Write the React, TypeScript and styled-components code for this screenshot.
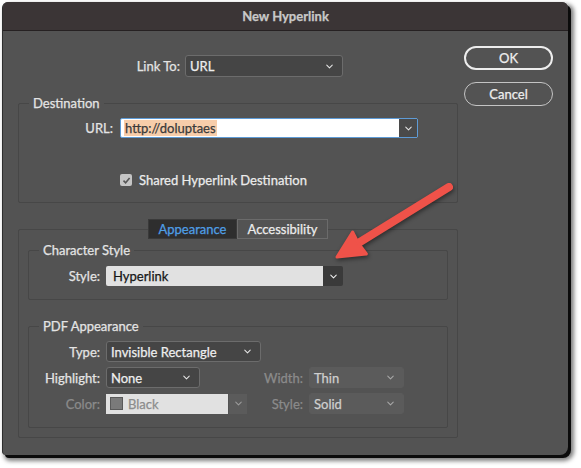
import React from 'react';
import styled, { createGlobalStyle } from 'styled-components';
import { ChevronDown } from 'lucide-react';

const GlobalStyle = createGlobalStyle`
  html, body {
    margin: 0;
    padding: 0;
    background: #fff;
  }
  body {
    font-family: Lato, "Liberation Sans", sans-serif;
    font-size: 13px;
    -webkit-text-stroke: 0.25px currentColor;
  }
`;

const Page = styled.div`
  position: relative;
  width: 581px;
  height: 468px;
  padding: 2px 0 0 2px;
  box-sizing: border-box;
  background: #fff;
  overflow: hidden;
`;

const Dialog = styled.div`
  width: 566px;
  height: 453px;
  display: flex;
  flex-direction: column;
  background: #535353;
  border-left: 1px solid #2e2e2e;
  box-sizing: border-box;
  border-radius: 6px 6px 8px 4px;
  box-shadow: 3px 3px 0 #0b0b0b, 4px 4px 4px 2px rgba(0, 0, 0, 0.5);
  overflow: hidden;
`;

const TitleBar = styled.div`
  height: 28px;
  line-height: 28px;
  flex: none;
  text-align: center;
  background: #3b3536;
  border-bottom: 1px solid #262122;
  color: #c8c8c8;
  font-weight: 700;
  font-size: 13px;
`;

const Body = styled.div`
  flex: 1;
  display: flex;
  gap: 6px;
  padding: 0 15px 0 15px;
`;

const Main = styled.div`
  width: 440px;
  display: flex;
  flex-direction: column;
`;

const ButtonColumn = styled.div`
  width: 89px;
  display: flex;
  flex-direction: column;
  gap: 12px;
  padding-top: 15px;
`;

const PillButton = styled.button<{ $primary?: boolean }>`
  height: 24px;
  width: 89px;
  box-sizing: border-box;
  border-radius: 12px;
  border: ${(p) => (p.$primary ? '2px solid #ededed' : '1px solid #c4c4c4')};
  background: transparent;
  color: #eeeeee;
  font-family: inherit;
  font-size: 13px;
  padding: 0;
`;

const Row = styled.div<{ $top: number; $gap?: number; $h?: number }>`
  display: flex;
  align-items: center;
  gap: ${(p) => p.$gap ?? 6}px;
  margin-top: ${(p) => p.$top}px;
  height: ${(p) => p.$h ?? 21}px;
`;

const Label = styled.span<{ $w: number; $disabled?: boolean }>`
  width: ${(p) => p.$w}px;
  flex: none;
  text-align: right;
  color: ${(p) => (p.$disabled ? '#8b8b8b' : '#e4e4e4')};
  white-space: nowrap;
`;

const Select = styled.div<{ $w: number; $h?: number; $muted?: boolean; $pad?: number }>`
  width: ${(p) => p.$w}px;
  height: ${(p) => p.$h ?? 21}px;
  box-sizing: border-box;
  display: flex;
  align-items: center;
  justify-content: space-between;
  padding: 0 7px 0 ${(p) => p.$pad ?? 4}px;
  border-radius: 3px;
  background: ${(p) => (p.$muted ? '#5b5b5b' : '#454545')};
  border: 1px solid ${(p) => (p.$muted ? '#5b5b5b' : '#6c6c6c')};
  color: ${(p) => (p.$muted ? '#cfcfcf' : '#eeeeee')};
  white-space: nowrap;
`;

const Group = styled.div<{ $top: number; $pb: number }>`
  margin-top: ${(p) => p.$top}px;
  border: 1px solid #474747;
  border-radius: 2px;
  padding-bottom: ${(p) => p.$pb}px;
  display: flex;
  flex-direction: column;
`;

const Caption = styled.div`
  align-self: flex-start;
  margin: -9px 0 0 10px;
  padding: 0 4px;
  height: 16px;
  line-height: 16px;
  background: #535353;
  color: #e4e4e4;
`;

const Panel = styled.div`
  margin-top: 26px;
  border: 1px solid #474747;
  border-radius: 2px;
  padding: 0 9px 9px;
  display: flex;
  flex-direction: column;
`;

const Tabs = styled.div`
  align-self: center;
  margin-top: -11px;
  display: flex;
  height: 20px;
`;

const Tab = styled.div<{ $active?: boolean; $w: number }>`
  width: ${(p) => p.$w}px;
  box-sizing: border-box;
  display: flex;
  align-items: center;
  justify-content: center;
  background: ${(p) => (p.$active ? '#2e2e2e' : '#535353')};
  border: 1px solid ${(p) => (p.$active ? '#3a3a3a' : '#6b6b6b')};
  color: ${(p) => (p.$active ? '#4f9fe6' : '#ececec')};
`;

const UrlCombo = styled.div`
  width: 298px;
  height: 20px;
  box-sizing: border-box;
  display: flex;
  border: 1px solid #5e9bd6;
  border-radius: 2px;
  background: #fff;
`;

const UrlText = styled.div`
  flex: 1;
  display: flex;
  align-items: center;
  padding-left: 3px;
  color: #3a3a3a;
`;

const Selected = styled.span`
  background: #f7cdaa;
  padding: 0 1px;
  line-height: 16px;
`;

const ComboButton = styled.div<{ $w: number; $bg: string }>`
  width: ${(p) => p.$w}px;
  flex: none;
  display: flex;
  align-items: center;
  justify-content: center;
  background: ${(p) => p.$bg};
`;

const Checkbox = styled.div`
  width: 12px;
  height: 12px;
  border-radius: 2px;
  background: #c5c5c5;
  display: flex;
  align-items: center;
  justify-content: center;
`;

const CheckText = styled.span`
  color: #ececec;
`;

const StyleCombo = styled.div`
  width: 237px;
  height: 20px;
  display: flex;
  border-radius: 2px;
  overflow: hidden;
`;

const LightField = styled.div<{ $w?: number }>`
  flex: ${(p) => (p.$w ? 'none' : '1')};
  width: ${(p) => (p.$w ? `${p.$w}px` : 'auto')};
  display: flex;
  align-items: center;
  gap: 5px;
  padding-left: 7px;
  background: #e1e1e1;
  color: #161616;
`;

const ColorCombo = styled.div`
  width: 134px;
  height: 20px;
  display: flex;
  gap: 1px;
`;

const Swatch = styled.span`
  width: 11px;
  height: 11px;
  margin-left: -3px;
  background: #7a7a7a;
  border: 1px solid #5a5a5a;
`;

const DisabledText = styled.span`
  color: #8c8c8c;
`;

const PdfGrid = styled.div`
  margin-top: 7px;
  display: grid;
  grid-template-columns: 71px 134px 57px 95px;
  grid-auto-rows: 21px;
  column-gap: 6px;
  row-gap: 5px;
  align-items: center;
`;

const Wide = styled.div`
  grid-column: 2 / span 3;
`;

const ArrowLayer = styled.svg`
  position: absolute;
  left: 0;
  top: 0;
  pointer-events: none;
  filter: drop-shadow(1px 2px 2px rgba(0, 0, 0, 0.45));
`;

const Chevron = ({ color = '#e6e6e6' }: { color?: string }) => (
  <ChevronDown size={11} strokeWidth={2.2} color={color} />
);

export default function App() {
  return (
    <Page>
      <GlobalStyle />
      <Dialog>
        <TitleBar>New Hyperlink</TitleBar>
        <Body>
          <Main>
            <Row $top={24} $gap={5} $h={22}>
              <Label $w={162}>Link To:</Label>
              <Select $w={158} $h={22}>
                URL
                <Chevron />
              </Select>
            </Row>

            <Group $top={26} $pb={14}>
              <Caption>Destination</Caption>
              <Row $top={7} $gap={7} $h={20}>
                <Label $w={94}>URL:</Label>
                <UrlCombo>
                  <UrlText>
                    <Selected>http://doluptaes</Selected>
                  </UrlText>
                  <ComboButton $w={18} $bg="#4a4a4a">
                    <Chevron />
                  </ComboButton>
                </UrlCombo>
              </Row>
              <Row $top={34} $gap={7} $h={16}>
                <Label $w={94} />
                <Checkbox>
                  <svg width="9" height="9" viewBox="0 0 9 9">
                    <path d="M1.5 4.6 L3.6 6.7 L7.6 2" fill="none" stroke="#555" strokeWidth="1.6" />
                  </svg>
                </Checkbox>
                <CheckText>Shared Hyperlink Destination</CheckText>
              </Row>
            </Group>

            <Panel>
              <Tabs>
                <Tab $active $w={89}>Appearance</Tab>
                <Tab $w={91}>Accessibility</Tab>
              </Tabs>

              <Group $top={11} $pb={13}>
                <Caption>Character Style</Caption>
                <Row $top={8} $h={20}>
                  <Label $w={71}>Style:</Label>
                  <StyleCombo>
                    <LightField>Hyperlink</LightField>
                    <ComboButton $w={20} $bg="#3a3a3a">
                      <Chevron color="#f0f0f0" />
                    </ComboButton>
                  </StyleCombo>
                </Row>
              </Group>

              <Group $top={26} $pb={13}>
                <Caption>PDF Appearance</Caption>
                <PdfGrid>
                  <Label $w={71}>Type:</Label>
                  <Wide>
                    <Select $w={155}>
                      Invisible Rectangle
                      <Chevron />
                    </Select>
                  </Wide>

                  <Label $w={71}>Highlight:</Label>
                  <Select $w={94}>
                    None
                    <Chevron />
                  </Select>
                  <Label $w={57} $disabled>Width:</Label>
                  <Select $w={95} $muted>
                    Thin
                    <Chevron color="#a8a8a8" />
                  </Select>

                  <Label $w={71} $disabled>Color:</Label>
                  <ColorCombo>
                    <LightField $w={115}>
                      <Swatch />
                      <DisabledText>Black</DisabledText>
                    </LightField>
                    <ComboButton $w={18} $bg="#5b5b5b">
                      <Chevron color="#9c9c9c" />
                    </ComboButton>
                  </ColorCombo>
                  <Label $w={57} $disabled>Style:</Label>
                  <Select $w={95} $muted>
                    Solid
                    <Chevron color="#a8a8a8" />
                  </Select>
                </PdfGrid>
              </Group>
            </Panel>
          </Main>

          <ButtonColumn>
            <PillButton $primary>OK</PillButton>
            <PillButton>Cancel</PillButton>
          </ButtonColumn>
        </Body>
      </Dialog>

      <ArrowLayer width="581" height="468" viewBox="0 0 581 468">
        <line x1="449" y1="187" x2="360" y2="242" stroke="#ef5249" strokeWidth="8" strokeLinecap="round" />
        <path
          d="M337 257 L352.6 232 L358.5 243.5 L366.4 254 Z"
          fill="#ef5249"
          stroke="#ef5249"
          strokeWidth="3"
          strokeLinejoin="round"
        />
      </ArrowLayer>
    </Page>
  );
}
